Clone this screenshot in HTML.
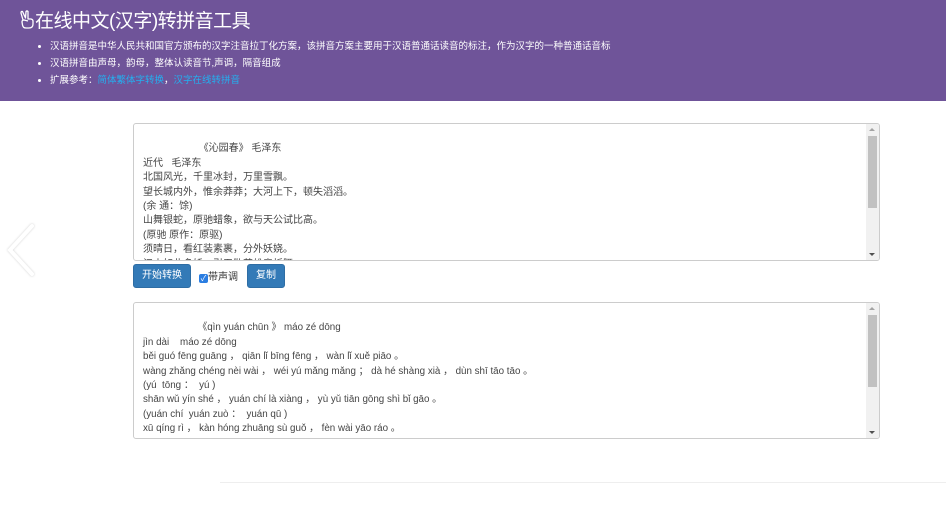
<!DOCTYPE html>
<html><head><meta charset="utf-8"><style>
*{box-sizing:border-box;margin:0;padding:0}
body{width:946px;height:526px;background:#fff;font-family:"Liberation Sans","Noto Sans CJK SC",sans-serif;position:relative;overflow:hidden;color:#333}
.hd{position:absolute;left:0;top:0;width:946px;height:101px;background:#6f5499;color:#fff}
.hd h1{position:absolute;left:35px;top:6px;font-size:19px;font-weight:normal;letter-spacing:-0.5px}
.hd ul{position:absolute;left:50px;top:38px;font-size:9.5px;line-height:17px;list-style:disc}
.hd a{color:#23b0f0;text-decoration:none}
.ta{position:absolute;left:133px;width:747px;border:1px solid #ccc;border-radius:3px;background:#fff;overflow:hidden;font-size:10px;line-height:14.4px;padding:4px 0 0 9px;white-space:pre;color:#444}
.sb{position:absolute;right:0;top:0;width:13px;height:100%;background:#f1f1f1}
.sb .th{position:absolute;left:2px;top:12px;width:9px;height:72px;background:#c1c1c1}
.sb .u,.sb .d{position:absolute;left:3px;width:0;height:0;border-left:3px solid transparent;border-right:3px solid transparent}
.sb .u{top:4px;border-bottom:3px solid #a3a3a3}
.sb .d{bottom:4px;border-top:3px solid #505050}
.btn{position:absolute;top:264px;height:24px;background:#337ab7;border:1px solid #2e6da4;border-radius:3px;color:#fff;font-size:10px;line-height:22px;text-align:center}
</style></head><body>
<div class="hd">
<svg style="position:absolute;left:19px;top:10px" width="17" height="19" viewBox="0 0 17 19" fill="none" stroke="#fff" stroke-width="1.3" stroke-linejoin="round"><path d="M4 10 L2 3 Q2 1 3.5 1.5 L6.5 8 L7 1.5 Q8 0.5 9 1.5 L9 9 L12 9 Q14 9.5 14 11 L14 14 Q14 18 10 18 L7 18 Q4 18 3.5 15 L3 12 Q3 10 5 10 L9 11"/></svg>
<h1>在线中文(汉字)转拼音工具</h1>
<ul>
<li>汉语拼音是中华人民共和国官方颁布的汉字注音拉丁化方案，该拼音方案主要用于汉语普通话读音的标注，作为汉字的一种普通话音标</li>
<li>汉语拼音由声母，韵母，整体认读音节,声调，隔音组成</li>
<li>扩展参考：<a>简体繁体字转换</a>，<a>汉字在线转拼音</a></li>
</ul>
</div>
<svg style="position:absolute;left:4px;top:222px" width="32" height="56"><path d="M28 4 L6 28 L28 52" stroke="#fff" stroke-width="4" fill="none" stroke-linecap="round" style="filter:drop-shadow(0 0 1px #ccc)"/></svg>
<div class="ta" style="top:123px;height:138px">
                    《沁园春》 毛泽东
近代   毛泽东
北国风光，千里冰封，万里雪飘。
望长城内外，惟余莽莽；大河上下，顿失滔滔。
(余 通：馀)
山舞银蛇，原驰蜡象，欲与天公试比高。
(原驰 原作：原驱)
须晴日，看红装素裹，分外妖娆。
江山如此多娇，引无数英雄竞折腰。<div class="sb"><div class="u"></div><div class="th"></div><div class="d"></div></div></div>
<div class="btn" style="left:133px;width:58px">开始转换</div>
<div style="position:absolute;left:199px;top:268px;font-size:10px;color:#333"><span style="display:inline-block;width:9px;height:9px;background:#2a7de1;border-radius:2px;vertical-align:-1px;color:#fff;font-size:8px;line-height:9px;text-align:center">✓</span>带声调</div>
<div class="btn" style="left:247px;width:38px">复制</div>
<div class="ta" style="top:302px;height:137px;font-size:9.8px">
                    《qìn yuán chūn 》 máo zé dōng
jìn dài    máo zé dōng
běi guó fēng guāng ， qiān lǐ bīng fēng ， wàn lǐ xuě piāo 。
wàng zhǎng chéng nèi wài ， wéi yú mǎng mǎng ； dà hé shàng xià ， dùn shī tāo tāo 。
(yú  tōng ：  yú )
shān wǔ yín shé ， yuán chí là xiàng ， yù yǔ tiān gōng shì bǐ gāo 。
(yuán chí  yuán zuò ：  yuán qū )
xū qíng rì ， kàn hóng zhuāng sù guǒ ， fèn wài yāo ráo 。
jiāng shān rú cǐ duō jiāo<div class="sb"><div class="u"></div><div class="th"></div><div class="d"></div></div></div>
<div style="position:absolute;left:220px;top:482px;width:726px;height:1px;background:#eee"></div>
</body></html>
